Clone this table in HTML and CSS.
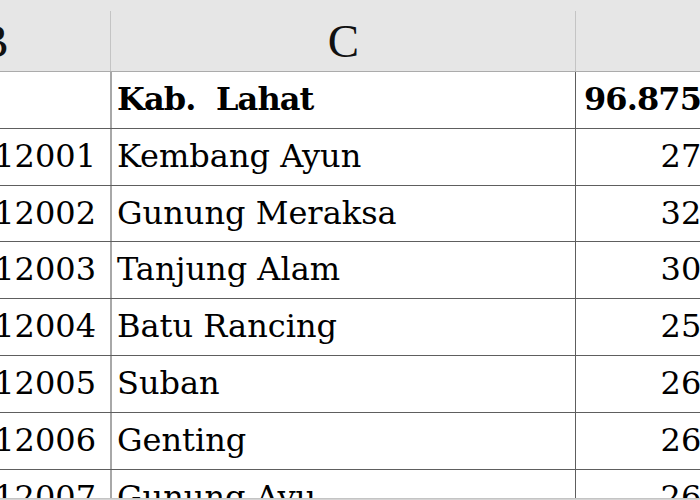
FILE: index.html
```html
<!DOCTYPE html>
<html>
<head>
<meta charset="utf-8">
<link rel="stylesheet" href="styles.css">
</head>
<body>
<div class="window">
  <div class="viewport">
    <div class="sheet">
      <div class="hrow">
        <div class="hcell colb">B</div>
        <div class="hcell colc">C</div>
        <div class="hcell cold">D</div>
      </div>
      <div class="row">
        <div class="cell colb num"></div>
        <div class="cell colc bold">Kab.  Lahat</div>
        <div class="cell cold total bold">96.875</div>
      </div>
      <div class="row">
        <div class="cell colb num">1604012001</div>
        <div class="cell colc">Kembang Ayun</div>
        <div class="cell cold num">2731</div>
      </div>
      <div class="row">
        <div class="cell colb num">1604012002</div>
        <div class="cell colc">Gunung Meraksa</div>
        <div class="cell cold num">3214</div>
      </div>
      <div class="row">
        <div class="cell colb num">1604012003</div>
        <div class="cell colc">Tanjung Alam</div>
        <div class="cell cold num">3052</div>
      </div>
      <div class="row">
        <div class="cell colb num">1604012004</div>
        <div class="cell colc">Batu Rancing</div>
        <div class="cell cold num">2518</div>
      </div>
      <div class="row">
        <div class="cell colb num">1604012005</div>
        <div class="cell colc">Suban</div>
        <div class="cell cold num">2647</div>
      </div>
      <div class="row">
        <div class="cell colb num">1604012006</div>
        <div class="cell colc">Genting</div>
        <div class="cell cold num">2683</div>
      </div>
      <div class="row">
        <div class="cell colb num">1604012007</div>
        <div class="cell colc">Gunung Ayu</div>
        <div class="cell cold num">2609</div>
      </div>
    </div>
  </div>
  <div class="hscroll"></div>
</div>
</body>
</html>
```
FILE: styles.css
```css
html, body {
  margin: 0;
  padding: 0;
  background: #ffffff;
}
.window {
  width: 700px;
  height: 500px;
  overflow: hidden;
  display: flex;
  flex-direction: column;
}
.viewport {
  height: 498px;
  overflow: hidden;
  flex: none;
}
.hscroll {
  height: 2px;
  flex: none;
  background: #d4d4d4;
  border-top: 1px solid #c4c4c4;
}
.sheet {
  margin-left: -124px;
  width: 1000px;
  font-family: "DejaVu Serif", "Liberation Serif", serif;
  color: #000;
}
.hrow {
  display: grid;
  grid-template-columns: 236px 464px 300px;
  height: 72px;
  box-sizing: border-box;
  padding-top: 11px;
  background: #e6e6e6;
  border-bottom: 1px solid #ababab;
}
.hcell {
  font-family: "Liberation Serif", serif;
  font-size: 47px;
  line-height: 60px;
  text-align: center;
  border-right: 1px solid #c4c4c4;
  color: #111;
}
.row {
  display: grid;
  grid-template-columns: 236px 464px 300px;
  height: 56.8px;
  box-sizing: border-box;
  border-bottom: 1px solid #5e5e5e;
}
.cell {
  font-size: 32px;
  line-height: 40px;
  padding-top: 7px;
  white-space: pre;
  overflow: hidden;
}
.colb {
  border-right: 2px solid #a8a8a8;
  padding-right: 14px;
}
.colc {
  border-right: 1px solid #5e5e5e;
  padding-left: 5px;
}
.hcell.colb {
  border-right: 1px solid #c4c4c4;
  padding-right: 0;
  margin-right: 1px;
}
.hcell.colc {
  padding-left: 0;
  border-right: 1px solid #c4c4c4;
}
.num {
  text-align: right;
}
.cold.num {
  padding-right: 134px;
}
.cold.total {
  text-align: left;
  padding-left: 8px;
}
.bold {
  font-weight: bold;
  letter-spacing: -0.9px;
}
```
